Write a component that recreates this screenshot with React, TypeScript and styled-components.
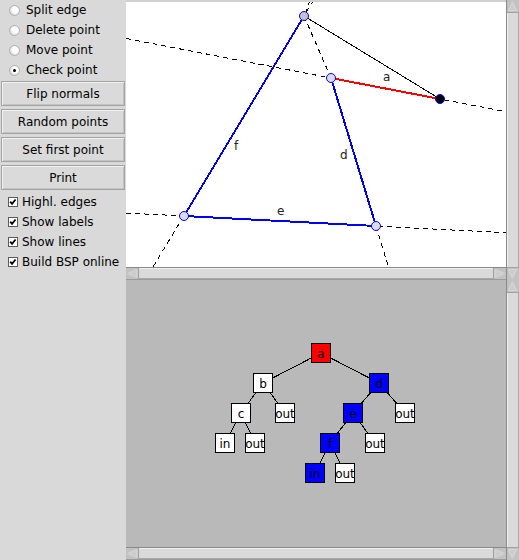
import React from "react";
import styled, { createGlobalStyle } from "styled-components";

const GlobalStyle = createGlobalStyle`
  html, body { margin: 0; padding: 0; background: #d9d9d9; }
  body { font-family: "DejaVu Sans", "Liberation Sans", sans-serif; font-size: 12px; color: #000; }
`;

const Frame = styled.div`
  display: flex;
  width: 519px;
  height: 560px;
  overflow: hidden;
  background: #d9d9d9;
`;

const SidePanel = styled.div`
  width: 126px;
  flex: none;
  display: flex;
  flex-direction: column;
`;

const OptionRow = styled.div`
  height: 20px;
  display: flex;
  align-items: center;
  gap: 6px;
  padding-left: 9px;
  white-space: nowrap;
`;

const RadioDot = styled.span<{ $on?: boolean }>`
  position: relative;
  width: 11px;
  height: 11px;
  box-sizing: border-box;
  border-radius: 50%;
  border: 1px solid #b0b0b0;
  background: radial-gradient(circle at 62% 42%, #ffffff 40%, #e0e0e0 70%, #bdbdbd 100%);
  flex: none;
  &::after {
    content: "";
    display: ${(p) => (p.$on ? "block" : "none")};
    position: absolute;
    left: 3px;
    top: 3px;
    width: 3px;
    height: 3px;
    border-radius: 50%;
    background: #000;
  }
`;

const ButtonStack = styled.div`
  margin-top: 1px;
  padding: 0 1px;
  display: flex;
  flex-direction: column;
  gap: 3px;
`;

const PanelButton = styled.button`
  height: 25px;
  box-sizing: border-box;
  background: #dadada;
  border: 1px solid #a2a2a2;
  box-shadow: inset 1px 1px 0 #f2f2f2, inset -1px -1px 0 #c4c4c4;
  font-family: inherit;
  font-size: 12px;
  color: #000;
  padding: 0;
  text-align: center;
`;

const CheckList = styled.div`
  margin-top: 2px;
  display: flex;
  flex-direction: column;
`;

const CheckRow = styled.div`
  height: 20px;
  display: flex;
  align-items: center;
  gap: 4px;
  padding-left: 8px;
  white-space: nowrap;
`;

const CheckBox = styled.span`
  width: 10px;
  height: 10px;
  box-sizing: border-box;
  border: 1px solid #5a5a5a;
  background: #fff;
  flex: none;
  display: flex;
  align-items: center;
  justify-content: center;
  overflow: visible;
`;

const Workspace = styled.div`
  width: 393px;
  flex: none;
  display: flex;
  flex-direction: column;
`;

const ScrollPane = styled.div`
  display: grid;
  grid-template-columns: 380px 13px;
  grid-template-rows: 267px 13px;
`;

const DrawingArea = styled.div`
  background: #fff;
  border-top: 2px solid #d0d0d0;
  overflow: hidden;
`;

const TreeArea = styled.div`
  background: #b9b9b9;
  overflow: hidden;
`;

const VScroll = styled.div`
  grid-row: 1 / span 2;
  grid-column: 2;
  display: flex;
  flex-direction: column;
  box-sizing: border-box;
  border-left: 1px solid #8a8a8a;
  background: #c2c2c2;
`;

const HScroll = styled.div`
  grid-row: 2;
  grid-column: 1;
  display: flex;
  box-sizing: border-box;
  border-top: 1px solid #8a8a8a;
  border-bottom: 1px solid #9a9a9a;
  background: #c2c2c2;
`;

const Thumb = styled.div<{ $vertical?: boolean }>`
  flex: 1;
  background: #dadada;
  box-shadow: ${(p) =>
    p.$vertical
      ? "inset 1px 0 0 #f0f0f0, inset -1px 0 0 #a8a8a8"
      : "inset 0 1px 0 #f0f0f0, inset 0 -1px 0 #a8a8a8"};
  border-left: ${(p) => (p.$vertical ? "none" : "1px solid #a0a0a0")};
  border-right: ${(p) => (p.$vertical ? "none" : "1px solid #a0a0a0")};
  border-top: ${(p) => (p.$vertical ? "1px solid #a0a0a0" : "none")};
  border-bottom: ${(p) => (p.$vertical ? "1px solid #a0a0a0" : "none")};
`;

const ArrowBox = styled.svg`
  flex: none;
  display: block;
`;

type Dir = "left" | "right" | "up" | "down";

const trianglePts: Record<Dir, string> = {
  left: "1.5,5.5 11,1.5 11,9.5",
  right: "10.5,5.5 1,1.5 1,9.5",
  up: "5.5,1.5 1.5,10.5 9.5,10.5",
  down: "5.5,10.5 1.5,1.5 9.5,1.5",
};

function Arrow({ dir }: { dir: Dir }) {
  const horiz = dir === "left" || dir === "right";
  const w = 12;
  const h = horiz ? 11 : 12;
  return (
    <ArrowBox width={w} height={h} viewBox={`0 0 ${w} ${h}`}>
      <polygon points={trianglePts[dir]} fill="#cdcdcd" stroke="#f2f2f2" strokeWidth="1" />
      <polygon points={trianglePts[dir]} fill="none" stroke="#8e8e8e" strokeWidth="0.6" opacity="0.5" />
    </ArrowBox>
  );
}

function HBar() {
  return (
    <HScroll>
      <Arrow dir="left" />
      <Thumb />
      <Arrow dir="right" />
    </HScroll>
  );
}

function VBar() {
  return (
    <VScroll>
      <Arrow dir="up" />
      <Thumb $vertical />
      <Arrow dir="down" />
    </VScroll>
  );
}

const BLUE = "#0000ff";

const P1 = [304, 16];
const P2 = [331, 78];
const P3 = [440, 99];
const P4 = [184, 216];
const P5 = [376, 226];

function GeometryCanvas() {
  const dash = "5 4";
  return (
    <svg width={380} height={265} viewBox="126 2 380 265" style={{ display: "block" }}>
      <g shapeRendering="crispEdges">
        <g stroke="#000" strokeWidth="1" strokeDasharray={dash} fill="none">
          <line x1={126} y1={38.5} x2={506} y2={111.7} />
          <line x1={126} y1={213} x2={506} y2={232.8} />
          <line x1={313.6} y1={0} x2={150} y2={272} />
          <line x1={P1[0]} y1={P1[1]} x2={P2[0]} y2={P2[1]} />
          <line x1={310} y1={0} x2={306} y2={12} />
          <line x1={P5[0]} y1={P5[1]} x2={390} y2={272} />
        </g>
        <line x1={P1[0]} y1={P1[1]} x2={P3[0]} y2={P3[1]} stroke="#000" strokeWidth="1" />
        <g strokeWidth="2" fill="none">
          <line x1={P4[0]} y1={P4[1]} x2={P1[0]} y2={P1[1]} stroke={BLUE} />
          <line x1={P2[0]} y1={P2[1]} x2={P5[0]} y2={P5[1]} stroke={BLUE} />
          <line x1={P4[0]} y1={P4[1]} x2={P5[0]} y2={P5[1]} stroke={BLUE} />
          <line x1={P2[0]} y1={P2[1]} x2={P3[0]} y2={P3[1]} stroke="#ff0000" />
        </g>
      </g>
      <circle cx={P1[0]} cy={P1[1]} r={4.5} fill="#c4c4c4" stroke={BLUE} strokeWidth="1" />
      <circle cx={P2[0]} cy={P2[1]} r={4.5} fill="#dcdce8" stroke={BLUE} strokeWidth="1" />
      <circle cx={P3[0]} cy={P3[1]} r={4.5} fill="#000" stroke={BLUE} strokeWidth="1" />
      <circle cx={P4[0]} cy={P4[1]} r={4.5} fill="#dcdce8" stroke={BLUE} strokeWidth="1" />
      <circle cx={P5[0]} cy={P5[1]} r={4.5} fill="#dcdce8" stroke={BLUE} strokeWidth="1" />
      <g fontFamily="DejaVu Sans, sans-serif" fontSize="12" fill="#222">
        <text x={383} y={81}>a</text>
        <text x={340} y={159}>d</text>
        <text x={277} y={215}>e</text>
        <text x={234} y={150}>f</text>
      </g>
    </svg>
  );
}

type TreeNode = { id: string; label: string; x: number; y: number; fill: string; parent?: string };

const nodes: TreeNode[] = [
  { id: "a", label: "a", x: 311, y: 343, fill: "#ff0000" },
  { id: "b", label: "b", x: 253, y: 373, fill: "#ffffff", parent: "a" },
  { id: "d", label: "d", x: 369, y: 373, fill: BLUE, parent: "a" },
  { id: "c", label: "c", x: 231, y: 403, fill: "#ffffff", parent: "b" },
  { id: "bo", label: "out", x: 275, y: 403, fill: "#ffffff", parent: "b" },
  { id: "e", label: "e", x: 343, y: 403, fill: BLUE, parent: "d" },
  { id: "do", label: "out", x: 395, y: 403, fill: "#ffffff", parent: "d" },
  { id: "ci", label: "in", x: 215, y: 433, fill: "#ffffff", parent: "c" },
  { id: "co", label: "out", x: 245, y: 433, fill: "#ffffff", parent: "c" },
  { id: "f", label: "f", x: 320, y: 433, fill: BLUE, parent: "e" },
  { id: "eo", label: "out", x: 365, y: 433, fill: "#ffffff", parent: "e" },
  { id: "fi", label: "in", x: 305, y: 463, fill: BLUE, parent: "f" },
  { id: "fo", label: "out", x: 335, y: 463, fill: "#ffffff", parent: "f" },
];

function BspTree() {
  const byId: Record<string, TreeNode> = {};
  nodes.forEach((n) => (byId[n.id] = n));
  return (
    <svg width={380} height={267} viewBox="126 280 380 267" style={{ display: "block" }}>
      <g stroke="#000" strokeWidth="1" shapeRendering="crispEdges">
        {nodes
          .filter((n) => n.parent)
          .map((n) => {
            const p = byId[n.parent as string];
            return <line key={"l" + n.id} x1={p.x + 10} y1={p.y + 10} x2={n.x + 10} y2={n.y + 10} />;
          })}
      </g>
      {nodes.map((n) => (
        <g key={n.id}>
          <rect
            x={n.x + 0.5}
            y={n.y + 0.5}
            width={19}
            height={19}
            fill={n.fill}
            stroke="#000"
            strokeWidth="1"
            shapeRendering="crispEdges"
          />
          <text
            x={n.x + 10}
            y={n.y + 14.5}
            textAnchor="middle"
            fontFamily="DejaVu Sans, sans-serif"
            fontSize="12"
            fill="#000"
          >
            {n.label}
          </text>
        </g>
      ))}
    </svg>
  );
}

const CheckMark = () => (
  <svg width="10" height="10" viewBox="0 0 10 10" style={{ display: "block" }}>
    <polyline points="1.5,4.5 3.8,7.2 8.2,1.8" fill="none" stroke="#000" strokeWidth="2.2" />
  </svg>
);

export default function App() {
  const modes = ["Split edge", "Delete point", "Move point", "Check point"];
  const actions = ["Flip normals", "Random points", "Set first point", "Print"];
  const toggles = ["Highl. edges", "Show labels", "Show lines", "Build BSP online"];
  return (
    <>
      <GlobalStyle />
      <Frame>
        <SidePanel>
          {modes.map((m, i) => (
            <OptionRow key={m}>
              <RadioDot $on={i === 3} />
              <span>{m}</span>
            </OptionRow>
          ))}
          <ButtonStack>
            {actions.map((a) => (
              <PanelButton key={a}>{a}</PanelButton>
            ))}
          </ButtonStack>
          <CheckList>
            {toggles.map((t) => (
              <CheckRow key={t}>
                <CheckBox>
                  <CheckMark />
                </CheckBox>
                <span>{t}</span>
              </CheckRow>
            ))}
          </CheckList>
        </SidePanel>
        <Workspace>
          <ScrollPane>
            <DrawingArea>
              <GeometryCanvas />
            </DrawingArea>
            <VBar />
            <HBar />
          </ScrollPane>
          <ScrollPane>
            <TreeArea>
              <BspTree />
            </TreeArea>
            <VBar />
            <HBar />
          </ScrollPane>
        </Workspace>
      </Frame>
    </>
  );
}
